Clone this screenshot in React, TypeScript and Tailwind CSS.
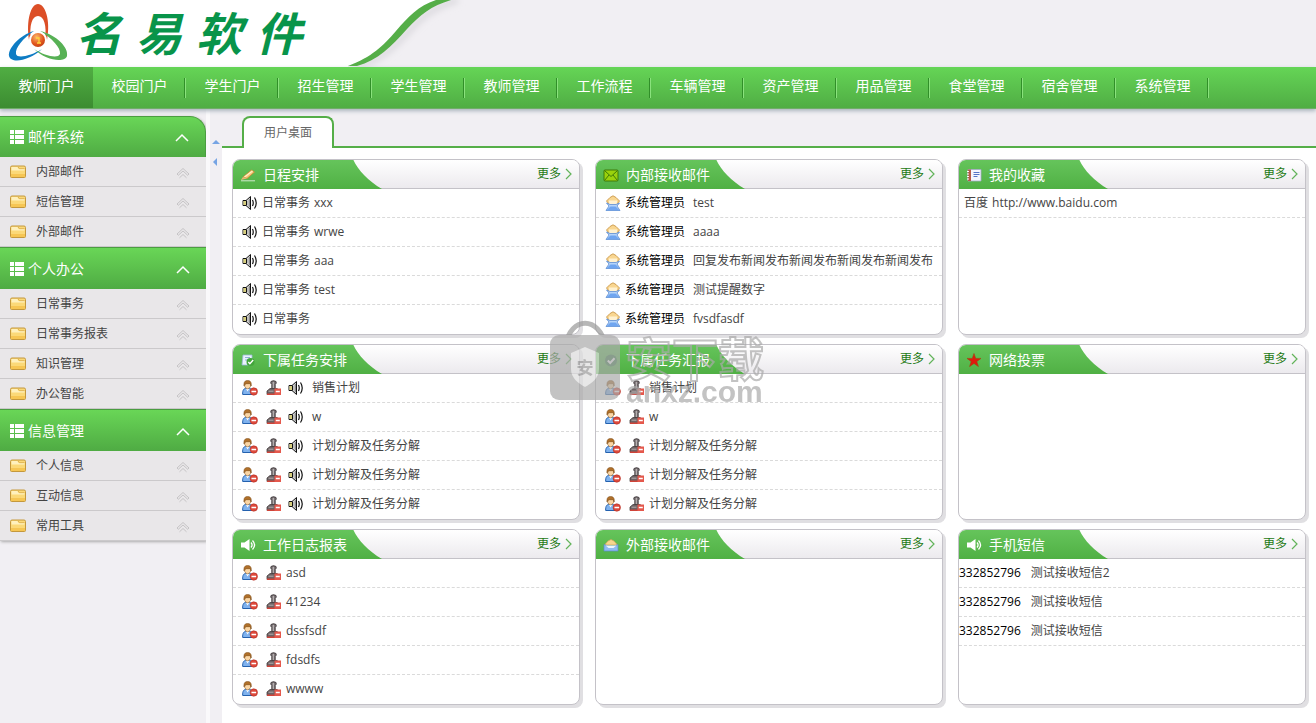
import type { ReactNode } from "react";

type IconName = "speaker" | "person" | "stamp" | "mail";

type Row = { icons?: IconName[]; lead?: string; sender?: string; text?: string };

type PanelData = {
  title: string;
  icon: ReactNode;
  rows: Row[];
  layout?: string;
};

// ── Icons ─────────────────────────────────────────────────────────────────────
function SpeakerIcon() {
  return (
    <svg className="w-4 h-4 shrink-0" viewBox="0 0 16 16" fill="none" aria-hidden>
      <path d="M1 5.5h3L8.500 1.500v13L4 10.500H1z" fill="#fff" stroke="#111" />
      <path d="M1.500 6H4v4H1.500z" fill="#d8cf7c" />
      <path d="M5 6l3-3v10L5 10z" fill="#8d8d8d" />
      <path d="M6 5v6" stroke="#eee" />
      <path d="M4.500 5.500v5" stroke="#111" />
      <path d="M10.500 5c1 2 1 4 0 6M12.500 2.500c2.200 3.500 2.200 7.500 0 11" stroke="#111" strokeWidth="1.200" />
    </svg>
  );
}

function PersonIcon() {
  return (
    <svg className="w-4 h-4 shrink-0" viewBox="0 0 16 16" fill="none" aria-hidden>
      <path d="M.7 14.500C.3 10 2 8 5.500 8s5.500 2 5 6.500z" fill="#7fb2ee" stroke="#2461ae" />
      <path d="M3.800 8.200l1.800 3.300 1.800-3.300z" fill="#fff" />
      <path d="M2.700 3h5.800v3.500q-1 2.300-2.900 2.300T2.700 6.500z" fill="#fbd6a4" stroke="#8a5a26" strokeWidth=".6" />
      <path d="M2 6C1.500 2 3 .5 5.600.5S9.800 2 9.200 6l-1-2.300H4.500L2.800 4.500z" fill="#b0702a" stroke="#7b4a18" strokeWidth=".5" />
      <circle cx="11.800" cy="11.500" r="3.700" fill="#de4a3c" stroke="#b02c22" strokeWidth=".6" />
      <path d="M9.500 11.500h4.600" stroke="#fff" strokeWidth="1.500" />
    </svg>
  );
}

function StampIcon() {
  return (
    <svg className="w-4 h-4 shrink-0" viewBox="0 0 16 16" fill="none" aria-hidden>
      <path d="M5 1.500Q7.500-.2 10 1.500q.8 1.800-.8 3v4H5.800v-4Q4.200 3.300 5 1.500z" fill="#7b7476" stroke="#3f393b" strokeWidth=".9" />
      <path d="M7.300 2v6.500" stroke="#c3bdbf" />
      <path d="M1 11l3-2.500h7L14 11v3.500H1z" fill="#6d6365" stroke="#443c3e" strokeWidth=".8" />
      <path d="M2.500 11.200h5" stroke="#b5adaf" />
      <path d="M1 13.500h8v1.500H1z" fill="#cf4338" />
      <path d="M8.500 8.500h6.500v6.500H8.500z" fill="#e4584c" />
      <path d="M9.800 11.600h4" stroke="#fff" strokeWidth="1.500" />
    </svg>
  );
}

function MailIcon() {
  return (
    <svg className="w-4 h-4 shrink-0" viewBox="0 0 16 16" fill="none" aria-hidden>
      <path d="M1.500 6L5 2.500 8 .8l3 1.700L14.500 6l-2 2.500h-9z" fill="#f9d690" stroke="#c9974a" strokeWidth=".9" />
      <path d="M4 5.500h8v4H4z" fill="#fff1d0" />
      <path d="M1.500 8L5 9.500h6L14.500 8l-2.500 3 3 4.500H1L4 11z" fill="#b5d4fa" stroke="#5b8bd0" strokeWidth=".8" />
      <path d="M1.500 15.200L5.500 11.500h5l4 3.700z" fill="#6fa5f0" />
    </svg>
  );
}

function RowIcon({ name }: { name: IconName }) {
  if (name === "speaker") return <SpeakerIcon />;
  if (name === "person") return <PersonIcon />;
  if (name === "stamp") return <StampIcon />;
  return <MailIcon />;
}

const titleIcon = "w-4 h-4 shrink-0";

const pencilIcon = (
  <svg className={titleIcon} viewBox="0 0 16 16" fill="none" aria-hidden>
    <path d="M3 10L11.500 3l3 2L7 11.500z" fill="#f6c878" stroke="#c98734" strokeWidth=".8" />
    <path d="M4.500 10L12.500 4" stroke="#fff0c8" strokeWidth="1.200" />
    <path d="M.8 13L3 10l4 1.500z" fill="#e9b774" />
    <path d="M1 13.800h14" stroke="#cfe9cb" />
  </svg>
);

const greenMailIcon = (
  <svg className={titleIcon} viewBox="0 0 16 16" fill="none" aria-hidden>
    <rect x="1" y="3" width="14" height="11" rx="1" fill="#9bd20c" stroke="#3e7a08" />
    <path d="M1.500 3.500L8 9.500l6.500-6M1.500 13.500L6 8M14.500 13.500L10 8" stroke="#3e7a08" />
  </svg>
);

const bookIcon = (
  <svg className={titleIcon} viewBox="0 0 16 16" fill="none" aria-hidden>
    <path d="M2 2.500h13V14H2z" fill="#f4f6ff" stroke="#a6a9c8" strokeWidth=".8" />
    <path d="M2 2.500h3V14H2z" fill="#b55b4b" />
    <path d="M1 4.500h2M1 7h2M1 9.500h2M1 12h2" stroke="#fff" />
    <path d="M7.500 5.500h6M7.500 7.500h6M7.500 9.500h4" stroke="#5575c8" />
  </svg>
);

const taskIcon = (
  <svg className={titleIcon} viewBox="0 0 16 16" fill="none" aria-hidden>
    <path d="M3 3h9v10H2z" fill="#e9f2fc" stroke="#9ab8d8" strokeWidth=".8" />
    <path d="M5 5.500h5M5 8h3" stroke="#8fb0d6" />
    <circle cx="10.500" cy="10" r="4" fill="#42a63a" />
    <path d="M8.300 10l1.600 1.800 3.300-3.800" stroke="#fff" strokeWidth="1.400" />
  </svg>
);

const checkIcon = (
  <svg className={titleIcon} viewBox="0 0 16 16" fill="none" aria-hidden>
    <circle cx="8" cy="8.500" r="6" fill="#3b7f49" />
    <path d="M4.800 8.500l2.400 2.500 4.300-4.700" stroke="#fff" strokeWidth="2" />
  </svg>
);

const starIcon = (
  <svg className={titleIcon} viewBox="0 0 16 16" fill="none" aria-hidden>
    <path d="M8 1.500l1.700 4.900H15l-4.200 3.100 1.600 5L8 11.500l-4.400 3 1.600-5L1 6.400h5.300z" fill="#e01a0c" stroke="#a6400f" strokeWidth=".6" />
  </svg>
);

const volumeIcon = (
  <svg className={titleIcon} viewBox="0 0 16 16" fill="none" aria-hidden>
    <path d="M1 5.500h3.500L9.500 2v12l-5-3.500H1z" fill="#fff" />
    <path d="M11 5.500c1.300 1.500 1.300 3.500 0 5M12.500 3.500c2.500 2.700 2.500 6.300 0 9" stroke="#fff" strokeWidth="1.300" />
  </svg>
);

const openMailIcon = (
  <svg className={titleIcon} viewBox="0 0 16 16" fill="none" aria-hidden>
    <path d="M1.500 8L5 4l3-1.500L11 4l3.500 4z" fill="#f6d68f" stroke="#d3a45a" strokeWidth=".7" />
    <path d="M1 7.500L5 9h6l4-1.500V14H1z" fill="#8fbcf2" stroke="#5a89cc" strokeWidth=".7" />
    <path d="M2.500 8.500h11l-3 2.500h-5z" fill="#eef5fe" />
  </svg>
);

function ListIcon() {
  return (
    <svg className="w-4 h-4 shrink-0" viewBox="0 0 16 16" fill="#fff" aria-hidden>
      <path d="M0 1h4v4H0zM5 1h9v4H5zM0 6h4v4H0zM5 6h9v4H5zM0 11h4v4H0zM5 11h9v4H5z" />
    </svg>
  );
}

function FolderIcon() {
  return (
    <svg className="w-4 h-4 shrink-0" viewBox="0 0 16 16" fill="none" aria-hidden>
      <path d="M.5 3.500Q.5 2 2 2h12q1.500 0 1.500 1.500v9q0 1-1 1h-13q-1 0-1-1z" fill="#fbd978" stroke="#c4983c" />
      <path d="M1.500 3h6l1 2h6v1.500h-13z" fill="#fff1bd" />
      <path d="M8 3l1.500 1.700h5" stroke="#d5a94a" strokeWidth=".8" />
      <path d="M1 10h14v2.500q0 .5-.5.5h-13q-.5 0-.5-.5z" fill="#f6c654" />
    </svg>
  );
}

// ── Data ──────────────────────────────────────────────────────────────────────
const navItems = [
  "教师门户", "校园门户", "学生门户", "招生管理", "学生管理", "教师管理", "工作流程",
  "车辆管理", "资产管理", "用品管理", "食堂管理", "宿舍管理", "系统管理",
];

const groups = [
  { title: "邮件系统", items: ["内部邮件", "短信管理", "外部邮件"] },
  { title: "个人办公", items: ["日常事务", "日常事务报表", "知识管理", "办公智能"] },
  { title: "信息管理", items: ["个人信息", "互动信息", "常用工具"] },
];

const taskTexts = ["销售计划", "w", "计划分解及任务分解", "计划分解及任务分解", "计划分解及任务分解"];

const panels: PanelData[] = [
  {
    title: "日程安排",
    icon: pencilIcon,
    rows: ["xxx", "wrwe", "aaa", "test", ""].map((text) => ({ icons: ["speaker"], lead: "日常事务", text })),
    layout: "pl-[9px] gap-1",
  },
  {
    title: "内部接收邮件",
    icon: greenMailIcon,
    rows: ["test", "aaaa", "回复发布新闻发布新闻发布新闻发布新闻发布", "测试提醒数字", "fvsdfasdf"].map((text) => ({
      icons: ["mail"], sender: "系统管理员", text,
    })),
    layout: "pl-[9px] gap-1",
  },
  {
    title: "我的收藏",
    icon: bookIcon,
    rows: [{ lead: "百度", text: "http://www.baidu.com" }],
    layout: "pl-[5px] gap-1",
  },
  {
    title: "下属任务安排",
    icon: taskIcon,
    rows: taskTexts.map((text) => ({ icons: ["person", "stamp", "speaker"], text })),
    layout: "pl-[9px] gap-2 [&>svg:nth-of-type(3)]:-ml-0.5",
  },
  {
    title: "下属任务汇报",
    icon: checkIcon,
    rows: taskTexts.map((text) => ({ icons: ["person", "stamp"], text })),
    layout: "pl-[9px] gap-2 [&>span]:-ml-1",
  },
  { title: "网络投票", icon: starIcon, rows: [] },
  {
    title: "工作日志报表",
    icon: volumeIcon,
    rows: ["asd", "41234", "dssfsdf", "fdsdfs", "wwww"].map((text) => ({ icons: ["person", "stamp"], text })),
    layout: "pl-[9px] gap-2 [&>span]:-ml-1",
  },
  { title: "外部接收邮件", icon: openMailIcon, rows: [] },
  {
    title: "手机短信",
    icon: volumeIcon,
    rows: ["测试接收短信2", "测试接收短信", "测试接收短信"].map((text) => ({ sender: "332852796", text })),
    layout: "gap-1.5",
  },
];

// ── Header ────────────────────────────────────────────────────────────────────
function Logo() {
  return (
    <svg className="w-[76px] h-[67px] shrink-0" viewBox="0 0 76 67" fill="none" aria-hidden>
      <defs>
        <radialGradient id="ball" cx=".4" cy=".3" r=".8">
          <stop offset="0" stopColor="#fbb86c" />
          <stop offset=".6" stopColor="#e2571e" />
          <stop offset="1" stopColor="#b93a10" />
        </radialGradient>
      </defs>
      <path d="M29 40C26 20 31 4 38 4s13 16 9 36l-2-1c2-13-1-23-7-23s-9 10-7 23z" fill="#dc4f27" />
      <path d="M34 31C20 35 8 48 9 56c2 8 20 5 33-7-11 7-25 10-26 5-1-6 7-16 18-23z" fill="#0e7cc4" />
      <path d="M40 31c17 4 29 17 27 25-2 7-21 5-33-7 11 7 24 10 26 5 1-6-8-16-20-23z" fill="#57b155" />
      <circle cx="38" cy="40" r="9" fill="#fff" />
      <circle cx="38" cy="40" r="7" fill="url(#ball)" />
      <path d="M36 38h3v5M37 43h4" stroke="#ffd43c" strokeWidth="1.300" />
    </svg>
  );
}

function Header() {
  return (
    <header className="relative flex h-[67px] bg-[#f1eff3]">
      <svg className="absolute left-0 top-0 w-[480px] h-[67px]" viewBox="0 0 480 67" fill="none" aria-hidden>
        <defs>
          <filter id="curveShade" x="-20%" y="-20%" width="140%" height="140%">
            <feGaussianBlur stdDeviation="3" />
          </filter>
        </defs>
        <path d="M358 67C385 58 399 42 412 28 424 14 440 5 458 0" stroke="#dcdadf" strokeWidth="6" filter="url(#curveShade)" />
        <path d="M0 0H436C418 7 409 17 396 31 383 46 372 58 348 66V67H0z" fill="#fff" />
        <path d="M348 66C372 57 383 46 396 31 409 16 418 6 436 0H451C431 6 420 15 407 29 391 47 378 60 357 66z" fill="#55ae48" />
      </svg>
      <div className="relative flex">
        <Logo />
        <h1 className="flex gap-3.5 text-[46px] leading-[66px] font-bold italic text-[#08944a]">
          {["名", "易", "软", "件"].map((c) => (
            <span key={c}>{c}</span>
          ))}
        </h1>
      </div>
    </header>
  );
}

function MainNav() {
  return (
    <nav className="relative z-10 flex h-[42px] bg-linear-to-b from-[#65d556] to-[#50ad44] border-b border-[#6fae68] shadow-[0_2px_4px_#a9b4bd]">
      {navItems.map((item, i) => (
        <a
          key={item}
          href="#"
          className={
            i === 0
              ? "w-[93px] h-full shrink-0 text-center text-sm leading-[38px] text-white bg-linear-to-b from-[#50ae43] to-[#3c8c31]"
              : "flex w-[93px] h-full shrink-0 items-center justify-between text-sm leading-5 text-white"
          }
        >
          {i === 0 ? item : (
            <>
              <span className="flex-1 pl-0.5 pb-1 text-center">{item}</span>
              <span className="w-0.5 h-5 bg-[#318f29] border-r border-[#8ae27d]" />
            </>
          )}
        </a>
      ))}
    </nav>
  );
}

// ── Sidebar ───────────────────────────────────────────────────────────────────
function Sidebar() {
  return (
    <aside className="w-[206px] shrink-0 pt-[7px]">
      <div className="rounded-tr-2xl shadow-[1px_1px_3px_#aaa]">
        {groups.map((group, i) => (
          <section key={group.title}>
            <button
              type="button"
              className={`flex w-full items-center gap-0.5 pl-2.5 pr-[15px] text-sm text-white bg-linear-to-b from-[#69d657] to-[#4fab43] border-t border-[#4b9d41] ${
                i === 0 ? "h-[41px] rounded-tr-2xl border-r" : "h-[42px]"
              }`}
            >
              <ListIcon />
              <span className="flex-1 text-left">{group.title}</span>
              <svg className="w-4 h-4" viewBox="0 0 16 16" fill="none" stroke="#fff" strokeWidth="1.500" aria-hidden>
                <path d="M2 12l6-6 6 6" />
              </svg>
            </button>
            <ul>
              {group.items.map((item) => (
                <li key={item}>
                  <a href="#" className="flex h-[30px] items-center gap-2.5 pl-2.5 pr-[15px] bg-[#e9e7e9] border-b border-[#cbc9cb] text-xs text-[#444]">
                    <FolderIcon />
                    <span className="flex-1">{item}</span>
                    <svg className="w-4 h-4" viewBox="0 0 16 16" fill="none" stroke="#c6c4c6" aria-hidden>
                      <path d="M2 10l6-5.500 6 5.500-1.300 1.300L8 7l-4.700 4.300zM4.500 13.800L8 10.500l3.500 3.300" />
                    </svg>
                  </a>
                </li>
              ))}
            </ul>
          </section>
        ))}
      </div>
    </aside>
  );
}

// ── Panels ────────────────────────────────────────────────────────────────────
function Panel({ title, icon, rows, layout = "" }: PanelData) {
  return (
    <section className="min-w-0 h-44 overflow-hidden rounded-lg border border-[#c4c2c8] bg-white shadow-[3px_3px_0_#e0dfe2]">
      <div className="relative flex h-[29px] items-center justify-between border-b border-[#c4c2c8] bg-linear-to-b from-white to-[#eceaee] pr-1">
        <svg className="absolute -left-px -top-px w-[150px] h-[30px]" viewBox="0 0 150 30" fill="none" aria-hidden>
          <defs>
            <linearGradient id="tabFill" x1="0" y1="0" x2="0" y2="1">
              <stop offset="0" stopColor="#66c55c" />
              <stop offset="1" stopColor="#50b044" />
            </linearGradient>
          </defs>
          <path d="M0 0h121c4 10 15 22 29 30H0z" fill="url(#tabFill)" />
        </svg>
        <h2 className="relative flex items-center gap-[7px] pl-[7px] pt-0.5 text-sm leading-5 text-white">
          {icon}
          {title}
        </h2>
        <a href="#" className="flex items-center text-xs text-[#1f7a14]">
          更多
          <svg className="w-3.5 h-3.5" viewBox="0 0 14 14" fill="none" stroke="#62b35a" strokeWidth="1.200" aria-hidden>
            <path d="M5 2l5 5-5 5" />
          </svg>
        </a>
      </div>
      <ul>
        {rows.map((row, i) => (
          <li
            key={i}
            className={`flex h-[29px] items-center border-b border-dashed border-[#dadada] nth-5:border-transparent text-xs text-[#444] whitespace-nowrap ${layout}`}
          >
            {row.icons?.map((name) => <RowIcon key={name} name={name} />)}
            {row.lead && <span>{row.lead}</span>}
            {row.sender && <span className="pr-1 text-black">{row.sender}</span>}
            {row.text && <span>{row.text}</span>}
          </li>
        ))}
      </ul>
    </section>
  );
}

function Watermark() {
  return (
    <div className="pointer-events-none absolute left-[328px] top-[211px] z-20 flex items-start gap-1 opacity-70" aria-hidden>
      <svg className="w-[72px] h-[82px]" viewBox="0 0 72 82" fill="none">
        <path d="M16 25C20-4 50-4 55 25" stroke="#999" strokeWidth="5" />
        <rect y="15" width="70" height="65" rx="9" fill="#aaa" />
        <path d="M35 27l14 6v16c0 9-7 14-14 18-7-4-14-9-14-18V33z" fill="#ddd" />
        <text x="35" y="54" textAnchor="middle" fontSize="17" fontWeight="700" fontFamily="Noto Sans CJK SC, sans-serif" fill="#999">安</text>
      </svg>
      <div className="flex flex-col pt-5">
        <span className="text-[46px] leading-9 font-bold text-transparent [-webkit-text-stroke:2px_#aaa]">安下载</span>
        <span className="font-['Liberation_Sans',sans-serif] text-3xl leading-8 font-bold text-[#aaa]">anxz.com</span>
      </div>
    </div>
  );
}

export default function App() {
  return (
    <div className="flex min-h-screen flex-col overflow-hidden bg-[#f1eff3] font-['Open_Sans','Noto_Sans_CJK_SC',sans-serif]">
      <Header />
      <MainNav />
      <div className="flex flex-1">
        <Sidebar />
        <div className="flex w-4 shrink-0 flex-col items-center border-l-4 border-[#faf9fb] pt-6">
          <button type="button" aria-label="收起顶部" className="h-5">
            <svg className="w-2.5 h-2.5" viewBox="0 0 10 10" fill="#76a4e4" aria-hidden>
              <path d="M1 6l4-4 4 4z" />
            </svg>
          </button>
          <button type="button" aria-label="收起菜单" className="h-5">
            <svg className="w-2.5 h-2.5" viewBox="0 0 10 10" fill="#76a4e4" aria-hidden>
              <path d="M6 0v8L2 4z" />
            </svg>
          </button>
        </div>
        <main className="relative min-w-0 flex-1 bg-white">
          <div className="flex h-[39px] items-end bg-[#f1eff3]">
            <div className="w-5 h-0.5 bg-[#55ae48]" />
            <button type="button" className="w-[92px] h-8 rounded-t-lg border-2 border-b-0 border-[#55ae48] bg-white text-xs text-[#666]">
              用户桌面
            </button>
            <div className="h-0.5 flex-1 bg-[#55ae48]" />
          </div>
          <div className="grid grid-cols-3 gap-x-[15px] gap-y-[9px] px-2.5 pt-[11px] pb-4">
            {panels.map((panel) => <Panel key={panel.title} {...panel} />)}
          </div>
          <Watermark />
        </main>
      </div>
    </div>
  );
}
